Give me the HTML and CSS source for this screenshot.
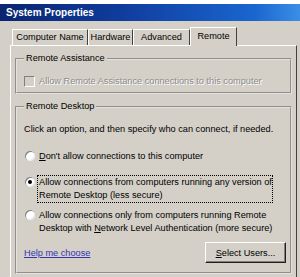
FILE: index.html
```html
<!DOCTYPE html>
<html lang="en">
<head>
    <meta charset="UTF-8">
    <title>System Properties</title>
    <link rel="stylesheet" href="styles.css">
</head>
<body>
    <div class="ventana">
        <div class="titulo">System Properties</div>

        <!-- Pestañas -->
        <div class="pestanas">
            <div class="pestana nombre">Computer Name</div>
            <div class="pestana hardware">Hardware</div>
            <div class="pestana avanzado">Advanced</div>
            <div class="pestana activa">Remote</div>
        </div>

        <div class="panel">
            <fieldset class="grupo asistencia">
                <legend>Remote Assistance</legend>
                <div class="fila deshabilitada">
                    <span class="casilla"></span>
                    <span>Allow Remote Assistance connections to this computer</span>
                </div>
            </fieldset>

            <fieldset class="grupo escritorio">
                <legend>Remote Desktop</legend>
                <p class="intro">Click an option, and then specify who can connect, if needed.</p>

                <div class="opcion uno">
                    <span class="radio"></span>
                    <span><u>D</u>on't allow connections to this computer</span>
                </div>
                <div class="opcion dos">
                    <span class="radio marcado"></span>
                    <span class="foco">Allow connections from computers running any version of<br>Remote Desktop (less secure)</span>
                </div>
                <div class="opcion tres">
                    <span class="radio"></span>
                    <span>Allow connections only from computers running Remote<br>Desktop with <u>N</u>etwork Level Authentication (more secure)</span>
                </div>

                <div class="pie">
                    <a href="#" class="ayuda">Help me choose</a>
                    <button><u>S</u>elect Users...</button>
                </div>
            </fieldset>
        </div>
    </div>
</body>
</html>
```

FILE: styles.css
```css
body {
    margin: 0;
    background-color: #fff;
    font-family: "Liberation Sans", Arial, sans-serif;
    font-size: 9.2px;
    color: #000;
}
.ventana {
    margin-top: 4px;
    width: 300px;
    height: 273px;
    background-color: #d4d0c8;
    overflow: hidden;
}
.titulo {
    height: 17px;
    line-height: 17px;
    padding-left: 6px;
    color: #fff;
    font-weight: bold;
    font-size: 10px;
    background: linear-gradient(to right, #0a2470, #0f3c9c 40%, #1a66d0 85%, #3b8ee6);
}
.pestanas {
    display: flex;
    align-items: flex-end;
    height: 18px;
    margin: 6px 0 0 12px;
}
.pestana {
    box-sizing: border-box;
    height: 16px;
    line-height: 15px;
    text-align: center;
    border: 1px solid;
    border-color: #fff #404040 transparent #fff;
    border-bottom: none;
}
.nombre {
    width: 76px;
}
.hardware {
    width: 45px;
}
.avanzado {
    width: 57px;
}
.pestana.activa {
    position: relative;
    z-index: 1;
    width: 47px;
    height: 19px;
    line-height: 16px;
    margin-bottom: -1px;
    background-color: #d4d0c8;
}
.panel {
    margin: 0 3px 0 10px;
    height: 240px;
    border: 1px solid;
    border-color: #fff #404040 #404040 #fff;
    padding: 0 4px;
}
.grupo {
    margin: 0;
    padding: 0 7px;
    border: 2px groove #e4e2de;
}
.grupo legend {
    padding: 0 2px;
    line-height: 13px;
}
.asistencia {
    margin-top: 6px;
    height: 38px;
}
.escritorio {
    margin-top: 6px;
    height: 170px;
}
.fila,
.opcion {
    display: flex;
    align-items: flex-start;
    gap: 4px;
    line-height: 13px;
    white-space: nowrap;
}
.deshabilitada {
    margin-top: 10px;
    color: #8c8c8c;
    text-shadow: 1px 1px #fff;
}
.casilla {
    width: 9px;
    height: 9px;
    margin-top: 1px;
    border: 1px solid;
    border-color: #808080 #fff #fff #808080;
    background-color: #d4d0c8;
}
.intro {
    margin: 10px 0 0 0;
    line-height: 13px;
}
.opcion {
    padding-left: 1px;
}
.uno {
    margin-top: 14px;
}
.dos {
    margin-top: 13px;
}
.tres {
    margin-top: 7px;
}
.radio {
    flex: none;
    width: 10px;
    height: 10px;
    margin-top: 1px;
    border-radius: 50%;
    background-color: #fff;
    box-shadow: inset 1px 1px #808080, inset -1px -1px #e8e8e8;
    display: flex;
    align-items: center;
    justify-content: center;
}
.radio.marcado::after {
    content: "";
    width: 4px;
    height: 4px;
    border-radius: 50%;
    background-color: #000;
}
.foco {
    width: 232px;
    margin: -1px 0 -1px -2px;
    padding: 0 1px;
    border: 1px dotted #000;
}
.pie {
    display: flex;
    align-items: center;
    justify-content: space-between;
    margin: 7px -3px 0 0;
}
.ayuda {
    color: #3434b4;
}
button {
    width: 81px;
    height: 21px;
    padding: 0;
    font-family: inherit;
    font-size: 9.2px;
    color: #000;
    background-color: #d4d0c8;
    border: 1px solid;
    border-color: #fff #202020 #202020 #fff;
    box-shadow: inset -1px -1px #808080;
}
```
